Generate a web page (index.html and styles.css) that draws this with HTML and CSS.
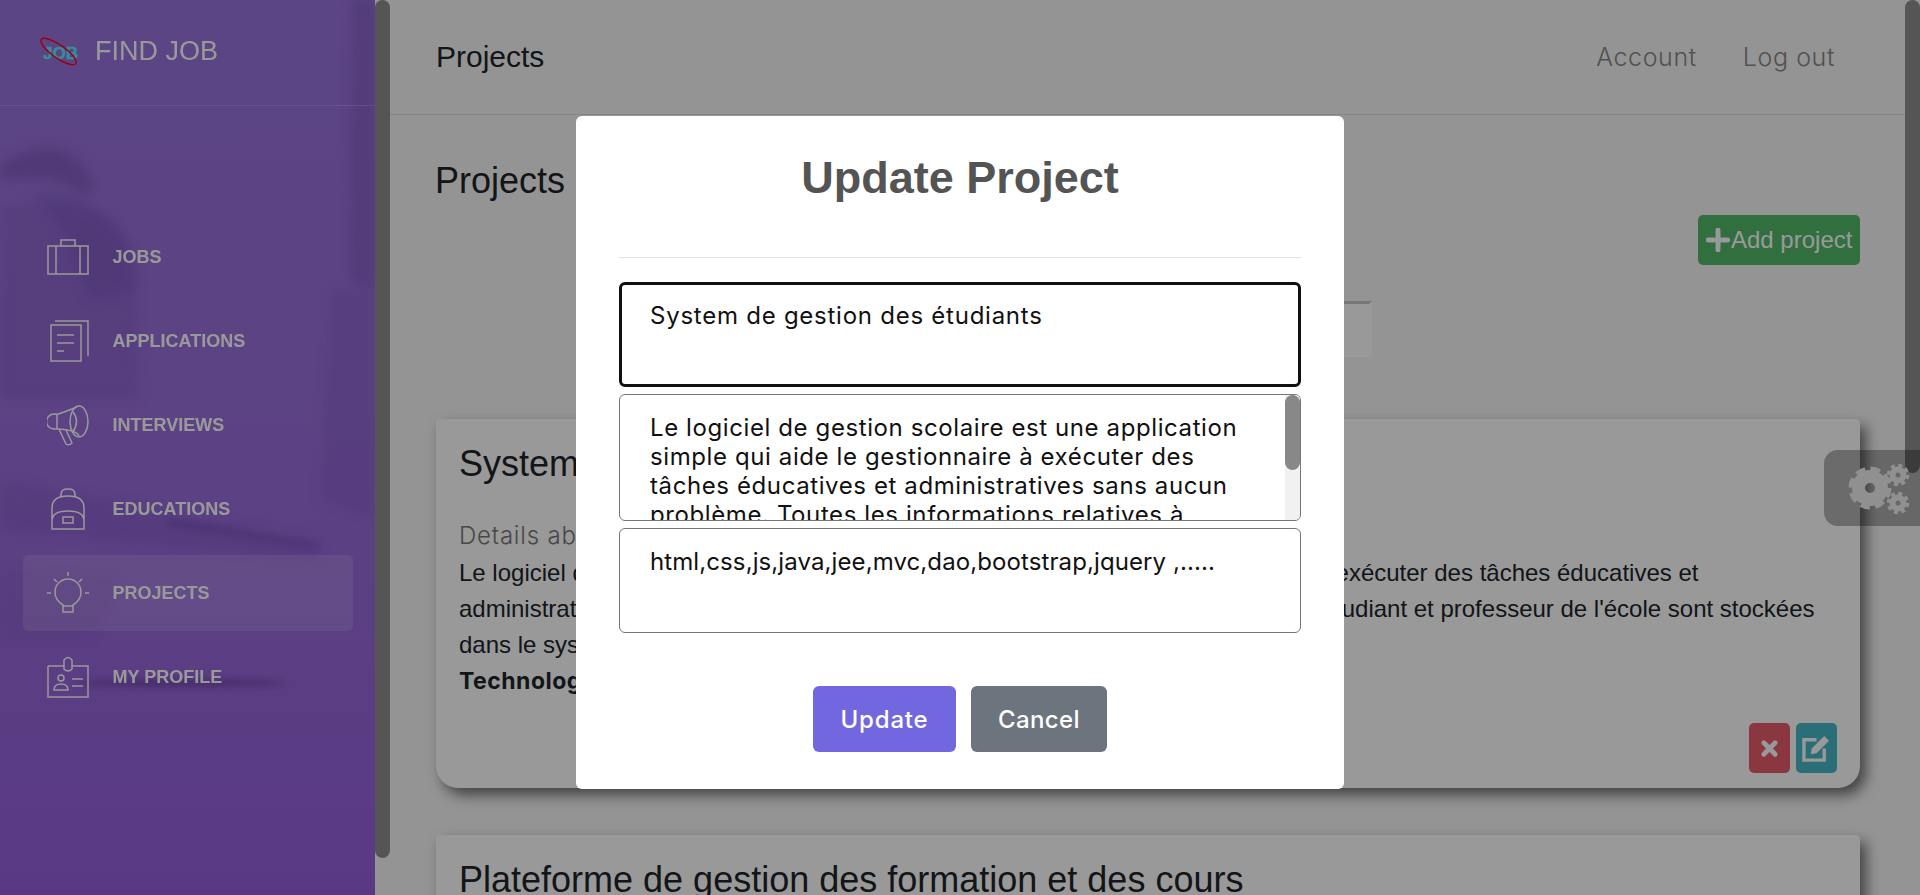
FILE: index.html
```html
<!DOCTYPE html>
<html lang="en">
<head>
    <meta charset="UTF-8">
    <meta name="viewport" content="width=device-width, initial-scale=1.0">
    <link rel="stylesheet" href="styles.css">
    <title>Find Job - Projects</title>
</head>
<body>
    <aside class="sidebar">
        <svg class="sidebar-photo" viewBox="0 0 375 895" preserveAspectRatio="none">
            <defs>
                <filter id="soft"><feGaussianBlur stdDeviation="6"/></filter>
                <filter id="softer"><feGaussianBlur stdDeviation="3"/></filter>
            </defs>
            <g filter="url(#soft)" fill="#6f4bb0">
                <path d="M0 165 Q60 130 85 170 Q100 190 85 195 Q50 170 0 180Z" opacity=".5"/>
                <path d="M30 190 Q130 190 140 290 L90 300 L60 225Z" opacity=".25"/>
                <path d="M0 205 Q120 190 135 260 L140 400 L0 400Z" opacity=".22"/>
                <path d="M352 0 L375 0 L375 290 L350 280Z" opacity=".35"/>
                <path d="M330 290 L375 290 L375 520 L320 500Z" opacity=".18"/>
                <path d="M0 480 L320 540 L320 560 L0 530Z" opacity=".22"/>
                <path d="M0 570 L120 580 L90 640 L0 640Z" opacity=".12"/>
            </g>
            <g filter="url(#softer)">
                <path d="M170 520 L318 545 L318 548 L170 525Z" fill="#4a2f86" opacity=".35"/>
                <ellipse cx="180" cy="683" rx="105" ry="4" fill="#4a2a7e" opacity=".45"/>
            </g>
        </svg>

        <div class="brand">
            <svg class="brand-logo" viewBox="0 0 38 28">
                <text x="3" y="22" class="brand-logo-text">JOB</text>
                <ellipse cx="18.500" cy="14.500" rx="21" ry="6.500" transform="rotate(35 18.500 14.500)" class="brand-logo-ring"/>
            </svg>
            <span class="brand-name">FIND JOB</span>
        </div>

        <nav class="nav">
            <a class="nav-item">
                <svg class="nav-icon" viewBox="0 0 42 36"><path d="M1 7h40v28H1zM9 7v28M33 7v28M14 7V1h14v6"/></svg>
                JOBS
            </a>
            <a class="nav-item">
                <svg class="nav-icon" viewBox="0 0 42 42"><path d="M4 5h30v36H4zM8 1h33v35M10 15h17M10 23h17M10 31h7"/></svg>
                APPLICATIONS
            </a>
            <a class="nav-item">
                <svg class="nav-icon" viewBox="0 0 42 42"><path d="M30 3 Q8 12 8 10 H7 A7.500 7.500 0 0 0 7 25 H10 Q30 26 32 32"/><ellipse cx="32" cy="17.500" rx="9" ry="15.500"/><path d="M26 8 Q33 17 26 28 M10 10v15M12 25l7 15q3 2 6-1l-6-13"/></svg>
                INTERVIEWS
            </a>
            <a class="nav-item">
                <svg class="nav-icon" viewBox="0 0 42 42"><path d="M5 41V20Q5 8 21 8Q37 8 37 20V41ZM14 8V6Q14 1 21 1Q28 1 28 6V8M5 33Q5 23 21 23Q37 23 37 33"/><rect x="16" y="29" width="10" height="6"/></svg>
                EDUCATIONS
            </a>
            <a class="nav-item is-active">
                <svg class="nav-icon" viewBox="0 0 42 42"><path d="M21 0v4M0 21h4M38 21h4M7 7l3 3M35 7l-3 3M16 33Q8 28 8 20A13 13 0 0 1 34 20Q34 28 26 33V40H16ZM16 34h10"/></svg>
                PROJECTS
            </a>
            <a class="nav-item">
                <svg class="nav-icon" viewBox="0 0 42 42"><path d="M1 10h16M25 10h16v31H1V10M17 13V4q4-5 8 0v9q-4 4-8 0Z"/><circle cx="14" cy="22" r="3"/><path d="M7 34q0-6 7-6t7 6ZM25 23h11M25 30h11"/></svg>
                MY PROFILE
            </a>
        </nav>
    </aside>
    <div class="thumb thumb-left"></div>

    <main class="main">
        <header class="topbar">
            <div class="topbar-title">Projects</div>
            <div class="topbar-links">
                <a>Account</a>
                <a>Log out</a>
            </div>
        </header>

        <section class="content">
            <h2 class="page-title">Projects</h2>
            <div class="toolbar">
                <button class="btn-add">
                    <svg class="btn-add-icon" viewBox="0 0 22 22"><path d="M11 2v18M2 11h18"/></svg>Add project
                </button>
            </div>
            <div class="search-row">
                <input class="search" type="text">
            </div>

            <article class="card">
                <h3 class="card-title">System de gestion des étudiants</h3>
                <div class="card-sub">Details about the project :</div>
                <p class="card-text">Le logiciel de gestion scolaire est une application simple qui aide le gestionnaire à exécuter des tâches éducatives et administratives sans aucun problème. Toutes les informations relatives à chaque étudiant et professeur de l'école sont stockées dans le système.</p>
                <div class="card-tech">Technologies</div>
                <div class="card-actions">
                    <button class="btn-icon btn-delete">
                        <svg viewBox="0 0 20 20"><path d="M4 4l12 12M16 4L4 16"/></svg>
                    </button>
                    <button class="btn-icon btn-edit">
                        <svg viewBox="0 0 30 30"><path class="edit-box" d="M15 6H2v21h21V15"/><path class="edit-pen" d="M9 21l1-6L23 2l5 5-13 13z"/></svg>
                    </button>
                </div>
            </article>

            <article class="card">
                <h3 class="card-title">Plateforme de gestion des formation et des cours</h3>
            </article>
        </section>
    </main>
    <div class="thumb thumb-right"></div>

    <div class="settings">
        <svg viewBox="0 0 70 58" class="settings-icon">
            <g class="gear-big"><circle cx="24" cy="29" class="gear-teeth"/><circle cx="24" cy="29"/></g>
            <g class="gear-small"><circle cx="52" cy="16" class="gear-teeth"/><circle cx="52" cy="16"/></g>
            <g class="gear-small"><circle cx="52" cy="44" class="gear-teeth"/><circle cx="52" cy="44"/></g>
        </svg>
    </div>

    <div class="backdrop"></div>

    <div class="modal">
        <h2 class="modal-title">Update Project</h2>
        <hr class="modal-line">
        <form class="modal-form">
            <textarea class="field field-focus">System de gestion des étudiants</textarea>
            <div class="field-wrap">
                <textarea class="field field-long">Le logiciel de gestion scolaire est une application simple qui aide le gestionnaire à exécuter des tâches éducatives et administratives sans aucun problème. Toutes les informations relatives à chaque étudiant et professeur de l'école sont stockées dans le système.</textarea>
                <div class="field-track"><div class="field-thumb"></div></div>
            </div>
            <textarea class="field field-tech">html,css,js,java,jee,mvc,dao,bootstrap,jquery ,.....</textarea>
        </form>
        <div class="modal-buttons">
            <button class="btn-update">Update</button>
            <button class="btn-cancel">Cancel</button>
        </div>
    </div>
</body>
</html>
```

FILE: styles.css
```css
* {
    box-sizing: border-box;
}

html,
body {
    height: 100%;
}

body {
    margin: 0;
    display: flex;
    overflow: hidden;
    background-color: #f7f7f7;
    font-family: 'Liberation Sans', Arial, sans-serif;
    color: #212529;
}

/* sidebar */
.sidebar {
    position: relative;
    flex: 0 0 375px;
    overflow: hidden;
    background: linear-gradient(180deg, #9a74dd 0%, #9a70dc 45%, #9660dc 100%);
}

.sidebar-photo {
    position: absolute;
    top: 0;
    left: 0;
    width: 100%;
    height: 100%;
}

.brand {
    position: relative;
    display: flex;
    align-items: center;
    height: 106px;
    padding: 0 0 3px 40px;
    border-bottom: 1px solid rgba(255, 255, 255, 0.2);
}

.brand-logo {
    flex: 0 0 38px;
    width: 38px;
    height: 28px;
    overflow: visible;
}

.brand-logo-text {
    font-family: 'Liberation Sans', Arial, sans-serif;
    font-size: 17px;
    font-weight: bold;
    fill: #58eeff;
    stroke: #58eeff;
    stroke-width: 0.4;
}

.brand-logo-ring {
    fill: none;
    stroke: #ff0020;
    stroke-width: 1.4;
}

.brand-name {
    margin-left: 17px;
    font-size: 27px;
    color: #fff;
}

.nav {
    position: relative;
    display: flex;
    flex-direction: column;
    gap: 8px;
    padding: 113px 22px 0 23px;
}

.nav-item {
    display: flex;
    align-items: center;
    height: 76px;
    padding-left: 24px;
    border-radius: 5px;
    font-size: 18px;
    font-weight: bold;
    color: #fff;
}

.nav-item.is-active {
    background-color: rgba(255, 255, 255, 0.14);
}

.nav-icon {
    flex: 0 0 42px;
    width: 42px;
    height: 42px;
    margin-right: 23.5px;
    fill: none;
    stroke: #fff;
    stroke-width: 1.5;
}

/* page scrollbars */
.thumb {
    position: absolute;
    top: 0;
    width: 15px;
    border-radius: 8px;
    background-color: #8e8e8e;
}

.thumb-left {
    left: 375px;
    height: 858px;
}

.thumb-right {
    right: 0;
    height: 473px;
}

/* main */
.main {
    flex: 1;
    margin: 0 15px;
    min-width: 0;
}

.topbar {
    display: flex;
    align-items: center;
    justify-content: space-between;
    height: 115px;
    padding: 0 70px 0 46px;
    border-bottom: 1px solid #ddd;
}

.topbar-title {
    font-size: 30px;
}

.topbar-links {
    display: flex;
    gap: 46px;
    font-family: Inter, 'Liberation Sans', sans-serif;
    font-size: 25px;
    font-weight: 300;
    letter-spacing: 0.6px;
    color: #888;
}

.content {
    padding: 46px 45px 0 46px;
}

.page-title {
    margin: 0 0 0 -1px;
    font-size: 36px;
    font-weight: 400;
    line-height: 40px;
}

.toolbar {
    display: flex;
    justify-content: flex-end;
    margin-top: 14px;
}

.btn-add {
    display: flex;
    align-items: center;
    width: 162px;
    height: 50px;
    padding: 0 0 0 8px;
    border: none;
    border-radius: 5px;
    background-color: #53b969;
    font-family: inherit;
    font-size: 24px;
    color: #fff;
    white-space: nowrap;
}

.btn-add-icon {
    width: 24px;
    height: 24px;
    margin-right: 1px;
    fill: none;
    stroke: #fff;
    stroke-width: 4.5;
    stroke-linecap: round;
}

.search-row {
    display: flex;
    justify-content: flex-end;
    margin: 36px 488px 62px 0;
}

.search {
    width: 440px;
    height: 56px;
    border: none;
    border-top: 3px solid #c8c8c8;
    border-right: 3px solid #fff;
    background-color: #fff;
}

.card {
    position: relative;
    height: 369px;
    margin-bottom: 47px;
    padding: 24px 23px 0 23px;
    border-radius: 4px 4px 22px 22px;
    background-color: #fff;
    box-shadow: 6px 7px 14px rgba(0, 0, 0, 0.55);
}

.card-title {
    margin: 0;
    font-size: 36px;
    font-weight: 400;
    line-height: 42px;
}

.card-sub {
    margin-top: 32px;
    font-family: Inter, 'Liberation Sans', sans-serif;
    font-size: 24px;
    font-weight: 300;
    letter-spacing: 0.8px;
    line-height: 38px;
    color: #777;
}

.card-text {
    margin: 0;
    font-size: 24px;
    line-height: 36px;
}

.card-tech {
    font-family: Inter, 'Liberation Sans', sans-serif;
    font-size: 23px;
    font-weight: 700;
    letter-spacing: 0.5px;
    line-height: 36px;
}

.card-actions {
    position: absolute;
    right: 23px;
    bottom: 15px;
    display: flex;
    gap: 6px;
}

.btn-icon {
    display: flex;
    align-items: center;
    justify-content: center;
    width: 41px;
    height: 50px;
    padding: 0;
    border: none;
    border-radius: 5px;
}

.btn-delete {
    background-color: #e75d6e;
}

.btn-delete svg {
    width: 19px;
    height: 19px;
    fill: none;
    stroke: #fff;
    stroke-width: 5;
    stroke-linecap: round;
}

.btn-edit {
    background-color: #46b7c8;
}

.btn-edit svg {
    width: 29px;
    height: 29px;
}

.edit-box {
    fill: none;
    stroke: #fff;
    stroke-width: 3.5;
}

.edit-pen {
    fill: #fff;
}

/* floating settings tab */
.settings {
    position: absolute;
    top: 450px;
    right: 0;
    display: flex;
    align-items: center;
    width: 96px;
    height: 76px;
    padding-left: 22px;
    border-radius: 14px 0 0 14px;
    background-color: rgba(0, 0, 0, 0.3);
}

.settings-icon {
    width: 70px;
    height: 58px;
    flex: none;
}

.gear-big circle,
.gear-small circle {
    fill: none;
    stroke: #f0f0f0;
}

.gear-big circle {
    stroke-width: 13;
    r: 11.500;
}

.gear-big .gear-teeth {
    r: 18;
    stroke-width: 7;
    stroke-dasharray: 9 5.140;
}

.gear-small circle {
    stroke-width: 6;
    r: 5.500;
}

.gear-small .gear-teeth {
    r: 9.500;
    stroke-width: 3.500;
    stroke-dasharray: 4 3.460;
}

/* modal */
.backdrop {
    position: absolute;
    top: 0;
    left: 0;
    width: 100%;
    height: 100%;
    background-color: rgba(0, 0, 0, 0.4);
}

.modal {
    position: absolute;
    top: 116px;
    left: 576px;
    width: 768px;
    height: 673px;
    padding: 0 43px;
    border-radius: 6px;
    background-color: #fff;
}

.modal-title {
    margin: 38px 0 0;
    font-size: 45px;
    line-height: 48px;
    text-align: center;
    color: #545454;
}

.modal-line {
    height: 1px;
    margin: 55px 0 0;
    border: none;
    background-color: #e5e5e5;
}

.modal-form {
    display: flex;
    flex-direction: column;
    gap: 7px;
    margin-top: 24px;
}

.field {
    display: block;
    width: 100%;
    height: 105px;
    padding: 18px 30px;
    border: 1px solid #767676;
    border-radius: 6px;
    outline: none;
    resize: none;
    font-family: Inter, 'Liberation Sans', sans-serif;
    font-size: 24px;
    font-weight: 400;
    letter-spacing: 0.6px;
    line-height: 29px;
    color: #111;
}

.field-focus {
    padding: 16px 28px;
    border: 3px solid #101010;
    letter-spacing: 0.75px;
}

.field-tech {
    letter-spacing: 0.1px;
}

.field-wrap {
    position: relative;
    height: 127px;
}

.field-long {
    height: 127px;
    overflow: hidden;
}

/* the textarea's own scrollbar, headless chrome does not paint it */
.field-track {
    position: absolute;
    top: 1px;
    right: 1px;
    bottom: 1px;
    width: 15px;
    border-radius: 0 5px 5px 0;
    background-color: #f1f1f1;
}

.field-thumb {
    height: 75px;
    border-radius: 8px;
    background-color: #888;
}

.modal-buttons {
    display: flex;
    justify-content: center;
    gap: 15px;
    margin-top: 53px;
}

.btn-update,
.btn-cancel {
    height: 66px;
    border: none;
    border-radius: 6px;
    font-family: Inter, 'Liberation Sans', sans-serif;
    font-size: 24px;
    font-weight: 500;
    letter-spacing: 0.4px;
    color: #fff;
}

.btn-update {
    width: 143px;
    letter-spacing: 0.8px;
    background-color: #7367df;
}

.btn-cancel {
    width: 136px;
    background-color: #6c757d;
}
```
